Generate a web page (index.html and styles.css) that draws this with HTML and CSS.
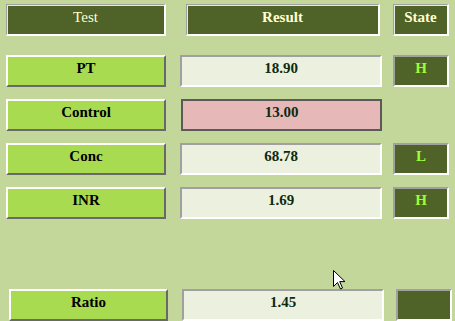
FILE: index.html
```html
<!DOCTYPE html>
<html lang="en">
<head>
    <meta charset="UTF-8">
    <title>INR Calculator</title>
    <link rel="stylesheet" href="styles.css">
</head>
<body>
    <div class="form">
        <div class="row head">
            <div class="cell title test">Test</div>
            <div class="cell title result">Result</div>
            <div class="cell title state">State</div>
        </div>

        <div class="row">
            <div class="cell btn">PT</div>
            <div class="cell value">18.90</div>
            <div class="cell flag">H</div>
        </div>
        <div class="row">
            <div class="cell btn">Control</div>
            <div class="cell value control">13.00</div>
        </div>
        <div class="row">
            <div class="cell btn">Conc</div>
            <div class="cell value">68.78</div>
            <div class="cell flag">L</div>
        </div>
        <div class="row">
            <div class="cell btn">INR</div>
            <div class="cell value">1.69</div>
            <div class="cell flag">H</div>
        </div>

        <div class="row ratio">
            <div class="cell btn">Ratio</div>
            <div class="cell value">1.45</div>
            <div class="cell flag"></div>
        </div>
    </div>

    <!-- mouse pointer -->
    <svg class="pointer" width="13" height="20" viewBox="0 0 13 20">
        <path d="M0.5 0.5 L0.5 16.5 L4.5 12.5 L7.5 19 L9.5 18 L6.7 11.6 L12 11.6 Z" fill="#fff" stroke="#000" stroke-width="1"/>
    </svg>
</body>
</html>
```

FILE: styles.css
```css
* {
    box-sizing: border-box;
    margin: 0;
    padding: 0;
}

body {
    width: 455px;
    height: 321px;
    overflow: hidden;
    position: relative;
    background: #c4d79b;
}

.form {
    padding: 4px 0 0 6px;
}

.row {
    display: flex;
    height: 32px;
    margin-bottom: 12px;
}

.head {
    margin-bottom: 19px;
}

.ratio {
    margin-top: 70px;
    padding-left: 3px;
}

.cell {
    height: 32px;
    text-align: center;
    font-family: "Liberation Serif", Tinos, "Times New Roman", Times, serif;
    font-size: 15px;
    font-weight: bold;
    line-height: 17px;
    padding-top: 4px;
}

/* dark header labels */
.title {
    background: #4f6228;
    color: #ffffd0;
    border-top: 1px solid #a0a0a0;
    border-left: 1px solid #a0a0a0;
    border-right: 2px solid #fff;
    border-bottom: 2px solid #fff;
    box-shadow: inset 1px 1px 0 #e8e8e8;
}

.test {
    width: 160px;
    font-weight: normal;
}

.result {
    width: 194px;
    margin-left: 20px;
}

.state {
    width: 56px;
    margin-left: 13px;
}

/* raised green buttons */
.btn {
    width: 160px;
    background: #a9db50;
    color: #000;
    border-top: 2px solid #fff;
    border-left: 2px solid #fff;
    border-right: 2px solid #696969;
    border-bottom: 2px solid #696969;
    padding-top: 3px;
}

.ratio .btn {
    width: 159px;
}

/* sunken value boxes */
.value {
    width: 202px;
    margin-left: 14px;
    background: #ebf1de;
    color: #0f2a10;
    border-top: 2px solid #a0a0a0;
    border-left: 2px solid #a0a0a0;
    border-right: 2px solid #fff;
    border-bottom: 2px solid #fff;
    padding-top: 3px;
}

.value.control {
    background: #e6b8b7;
    border: 2px solid #5a5a5a;
    margin-left: 15px;
    width: 201px;
}

.flag {
    width: 56px;
    margin-left: 11px;
    background: #4f6228;
    color: #99ff33;
    border-top: 2px solid #a0a0a0;
    border-left: 2px solid #a0a0a0;
    border-right: 2px solid #fff;
    border-bottom: 2px solid #fff;
    padding-top: 3px;
}

.ratio .flag {
    margin-left: 12px;
}

.pointer {
    position: absolute;
    left: 333px;
    top: 270px;
}
```
